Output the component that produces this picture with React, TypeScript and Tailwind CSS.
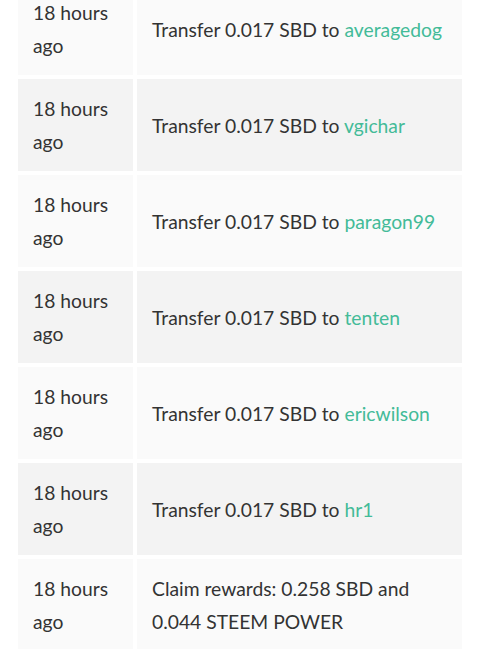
import React from 'react';

const rows = [
  { time: '18 hours ago', to: 'averagedog' },
  { time: '18 hours ago', to: 'vgichar' },
  { time: '18 hours ago', to: 'paragon99' },
  { time: '18 hours ago', to: 'tenten' },
  { time: '18 hours ago', to: 'ericwilson' },
  { time: '18 hours ago', to: 'hr1' },
];

export default function App() {
  return (
    <div className="h-[649px] overflow-hidden bg-white font-['Lato',sans-serif] text-[19.3px] leading-[33px] text-[#333]">
      <div className="-mt-[17px] flex flex-col gap-[4px] px-[18px]">
        {rows.map((row, i) => (
          <div key={row.to} className="flex gap-[4px]">
            <div className={`w-[115px] shrink-0 px-[15px] py-[13px] ${i % 2 === 0 ? 'bg-[#fafafa]' : 'bg-[#f3f3f3]'}`}>
              18 hours
              <br />
              ago
            </div>
            <div className={`flex flex-1 items-center px-[15px] ${i % 2 === 0 ? 'bg-[#fafafa]' : 'bg-[#f3f3f3]'}`}>
              <span className="whitespace-nowrap">
                Transfer 0.017 SBD to <span className="text-[#43bb98]">{row.to}</span>
              </span>
            </div>
          </div>
        ))}
        <div className="flex gap-[4px]">
          <div className="w-[115px] shrink-0 bg-[#fafafa] px-[15px] py-[13px]">
            18 hours
            <br />
            ago
          </div>
          <div className="flex-1 bg-[#fafafa] px-[15px] py-[13px]">
            Claim rewards: 0.258 SBD and
            <br />
            0.044 STEEM POWER
          </div>
        </div>
      </div>
    </div>
  );
}
